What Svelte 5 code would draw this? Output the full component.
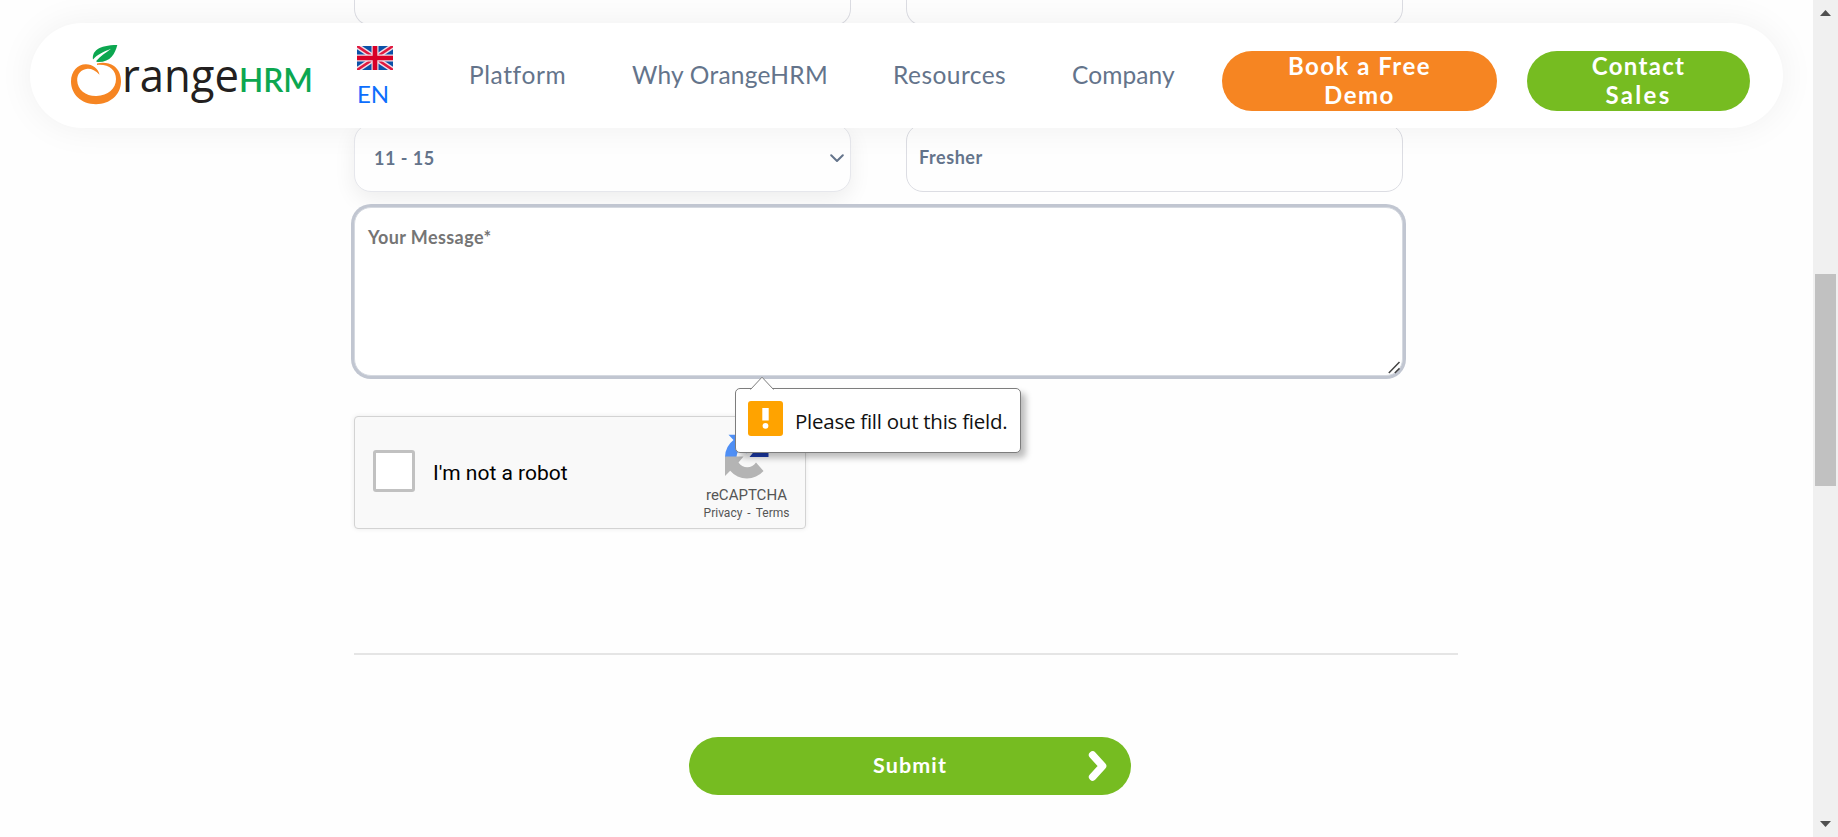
<script>
  const links = [
    { label: 'Platform', spacing: 0.6 },
    { label: 'Why OrangeHRM', spacing: 0.24 },
    { label: 'Resources', spacing: 0.45 },
    { label: 'Company', spacing: 0.1 }
  ];
</script>

<div class="window">
  <div class="page">
    <main>
      <div class="row">
        <div class="field cut"></div>
        <div class="field cut"></div>
      </div>
      <div class="row second">
        <div class="field select">
          <span>11 - 15</span>
          <svg width="14" height="9" viewBox="0 0 14 9"><path d="M1.2 1.2 7 7l5.8-5.8" fill="none" stroke="#64748b" stroke-width="2" stroke-linecap="round" stroke-linejoin="round" /></svg>
        </div>
        <div class="field input"><span>Fresher</span></div>
      </div>
      <div class="message">
        <span>Your Message*</span>
        <svg class="grip" width="13" height="13" viewBox="0 0 13 13"><path d="M.8 12 11.5 1M6.8 12 11.5 7.4" stroke="#444" stroke-width="1.5" fill="none" /></svg>
        <div class="tooltip">
          <svg class="tip" width="24" height="14" viewBox="0 0 24 14"><path d="M.5 13.5 12 1.2l11.5 12.3" fill="#fff" stroke="#7d7d7d" /><path d="M1.5 13.5h21" stroke="#fff" /></svg>
          <svg width="35" height="35" viewBox="0 0 35 35"><rect width="35" height="35" rx="3" fill="#ffa300" /><rect x="14.3" y="7" width="6.4" height="12.5" fill="#fff" /><circle cx="17.5" cy="24.8" r="2.9" fill="#fff" /></svg>
          <span>Please fill out this field.</span>
        </div>
      </div>
      <div class="captcha">
        <div class="check"></div>
        <span class="robot">I'm not a robot</span>
        <div class="brand">
          <svg width="46" height="46" viewBox="0 0 46 46">
            <path d="M44.5 23V3l-5.2 5.2A22 22 0 0 0 23 .8v12a10 10 0 0 1 7.5 4.3L25.5 23z" fill="#1c3aa9" />
            <path d="M23 .8H4.5l5 5.3A22 22 0 0 0 1 23h11.5a11 11 0 0 1 4.5-8.5l6 5z" fill="#4f8ff5" />
            <path d="M1 22.5V42l5.2-5.3A22 22 0 0 0 39.5 37L32 28.5A10.5 10.5 0 0 1 14.5 28.5L19.5 22.5z" fill="#b4b4b4" />
          </svg>
          <span class="name">reCAPTCHA</span>
          <span class="terms"><span>Privacy</span><span>-</span><span>Terms</span></span>
        </div>
      </div>
      <hr />
      <button class="submit">
        <span>Submit</span>
        <svg width="20" height="32" viewBox="0 0 20 32"><path d="M4.6 5 14.6 16 4.6 27" fill="none" stroke="#fff" stroke-width="7.5" stroke-linecap="round" stroke-linejoin="round" /></svg>
      </button>
    </main>

    <header>
      <svg class="logo" width="250" height="72" viewBox="66 38 250 72">
        <path fill="#f68522" fill-rule="evenodd" d="M97 63.500C103 62 109 62.800 114 66C119 69.500 121.300 76 121 82C120.500 95 110 104.200 96 104.200C81 104.200 71 94 71 81.500C71 71 78 64 86 64.200C92.500 64.400 98.500 68.500 99.500 74.800C95.500 70.300 91.500 68.500 87.500 68.700C81 69.200 77 74 77.200 80.500C77.500 90 86 96.300 96.500 96C108 95.800 116 88.500 116 79C116 70 108.500 63.800 97 65z" />
        <path fill="#0ca750" d="M93 59.500C92 51.500 98 45 117.300 45C115 54 110.500 62.500 97.500 62L96 61.300C100 56 106 53 111 48.800C103 52 97.500 54.500 93 59.500z" />
        <text x="122" y="92" class="range" textLength="117" lengthAdjust="spacingAndGlyphs">range</text>
        <text x="239" y="91.500" class="hrm" textLength="74" lengthAdjust="spacingAndGlyphs">HRM</text>
      </svg>
      <div class="lang">
        <svg width="36" height="24" viewBox="0 0 36 24">
          <rect width="36" height="24" fill="#0b52a8" />
          <path d="M0 0 36 24M36 0 0 24" stroke="#f0dce6" stroke-width="5.500" />
          <path d="M0 0 36 24M36 0 0 24" stroke="#e0193f" stroke-width="2.600" />
          <path d="M18 0v24M0 12h36" stroke="#f0dce6" stroke-width="7" />
          <path d="M18 0v24M0 12h36" stroke="#d80027" stroke-width="4.600" />
        </svg>
        <span>EN</span>
      </div>
      <nav>
        {#each links as link}
          <span style="letter-spacing: {link.spacing}px">{link.label}</span>
        {/each}
      </nav>
      <div class="cta demo"><span class="book">Book a Free</span><span class="demo-word">Demo</span></div>
      <div class="cta sales"><span class="contact">Contact</span><span class="sales-word">Sales</span></div>
    </header>
  </div>
  <div class="scrollbar">
    <svg width="11" height="6" viewBox="0 0 11 6"><path d="M5.5 0 11 6H0z" fill="#505050" /></svg>
    <div class="thumb"></div>
    <svg class="down" width="11" height="6" viewBox="0 0 11 6"><path d="M0 0h11L5.5 6z" fill="#505050" /></svg>
  </div>
</div>

<style>
  :global(body) { background: #fefefe; overflow: hidden; }
  .window { display: flex; height: 837px; width: 1838px; overflow: hidden; font-family: Lato, sans-serif; box-sizing: border-box; }
  .window :global(*) { box-sizing: border-box; }
  svg { display: block; flex: none; }
  .page { position: relative; width: 1813px; height: 837px; overflow: hidden; }
  main { margin-left: 354px; width: 1104px; display: flex; flex-direction: column; }
  .row { display: grid; grid-template-columns: 497px 497px; gap: 55px; }
  .second { margin-top: 98px; }
  .field { height: 68px; border: 1px solid #dcdde3; border-radius: 17px; background: #fefefe; color: #64748b; font-size: 18px; font-weight: 700; line-height: 22px; }
  .cut { height: 26px; border-top: 0; border-radius: 0 0 17px 17px; }
  .select { display: flex; justify-content: space-between; padding: 22px 6px 0 19px; letter-spacing: .5px; border-color: #e6e7ec; box-shadow: 0 7px 22px rgba(0,0,0,.07); }
  .select svg { margin-top: 7px; }
  .input { padding: 21px 0 0 12px; letter-spacing: .55px; }
  .message { position: relative; width: 1049px; height: 169px; margin-top: 15px; padding: 18px 13px; border-radius: 17px; background: #fff; border: 1px solid #d5d9e0; box-shadow: 0 0 0 3px #c1c6d1; color: #757575; font-size: 18px; font-weight: 700; letter-spacing: .4px; line-height: 22px; }
  .grip { position: absolute; right: 1px; bottom: 1px; }
  .tooltip { position: absolute; z-index: 2; left: 380px; top: 180px; width: 286px; height: 65px; display: flex; gap: 12px; padding: 12px; border: 1px solid #7d7d7d; border-radius: 5px; background: #fff; box-shadow: 5px 5px 6px rgba(0,0,0,.26); color: #111; }
  .tooltip span { font: 400 20.5px/30px "Open Sans", sans-serif; letter-spacing: -.25px; white-space: nowrap; padding-top: 5px; }
  .tip { position: absolute; left: 14px; top: -13px; }
  .captcha { display: flex; width: 452px; height: 113px; margin-top: 40px; border: 1px solid #d3d3d3; border-radius: 4px; background: #f9f9f9; box-shadow: 0 0 5px rgba(0,0,0,.08); font-family: Roboto, sans-serif; }
  .check { width: 42px; height: 42px; margin: 33px 0 0 18px; border: 3px solid #c1c1c1; border-radius: 3px; background: #fff; }
  .robot { margin: 44px 0 0 18px; font-size: 21px; line-height: 25px; color: #000; white-space: nowrap; width: 272px; }
  .brand { display: flex; flex-direction: column; align-items: center; width: 83px; margin: 17px 0 0 0; color: #555; }
  .name { font-size: 15px; line-height: 18px; margin-top: 6px; }
  .terms { display: flex; gap: 5px; font-size: 12px; line-height: 14px; margin-top: 2px; }
  hr { width: 1104px; height: 2px; margin: 124px 0 0; border: 0; background: #e5e5e5; }
  .submit { display: flex; align-items: center; justify-content: space-between; width: 442px; height: 58px; margin: 82px 0 0 335px; padding: 0 23px 0 184px; border: 0; border-radius: 29px; background: #76bc21; color: #fff; font: 700 21.5px/24px Lato, sans-serif; letter-spacing: 1.1px; }
  .submit span { margin-top: -3px; }
  header { position: absolute; z-index: 1; left: 30px; top: 23px; width: 1753px; height: 105px; display: flex; border-radius: 53px; background: #fff; box-shadow: 0 0 36px rgba(0,0,0,.06); }
  .logo { margin: 15px 0 0 36px; }
  .range { font: 400 45px "Open Sans", sans-serif; fill: #231f20; }
  .hrm { font: 600 33px Lato, sans-serif; fill: #0ca750; }
  .lang { width: 40px; margin: 23px 0 0 41px; color: #0d6efd; font-size: 24px; font-weight: 400; line-height: 29px; }
  .lang span { display: block; margin-top: 9px; letter-spacing: -.2px; }
  nav { display: grid; grid-template-columns: 163px 261px 179px 118px; margin: 37px 0 0 72px; color: #64748b; font-size: 24.5px; font-weight: 400; line-height: 29px; white-space: nowrap; font-variant-ligatures: none; }
  .cta { height: 60px; margin-top: 28px; border-radius: 30px; color: #fff; font-size: 24px; font-weight: 700; line-height: 29px; display: flex; flex-direction: column; align-items: center; white-space: nowrap; }
  .demo { width: 275px; margin-left: 32px; background: #f68522; }
  .sales { width: 223px; margin-left: 30px; background: #76bc21; }
  .book { letter-spacing: 1.5px; }
  .demo-word { letter-spacing: 1.5px; }
  .contact { letter-spacing: 1.3px; }
  .sales-word { letter-spacing: 2.3px; }
  .scrollbar { width: 25px; height: 837px; background: #f0f0f0; display: flex; flex-direction: column; align-items: center; padding-top: 10px; }
  .thumb { width: 21px; height: 212px; margin-top: 258px; background: #c1c1c1; }
  .down { margin-top: 335px; }
</style>
